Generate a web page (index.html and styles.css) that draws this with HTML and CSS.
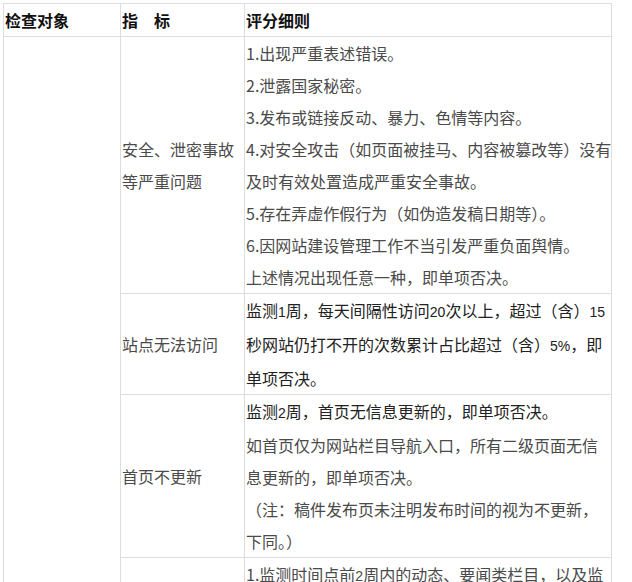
FILE: index.html
```html
<!DOCTYPE html>
<html lang="zh-CN">
<head>
  <meta charset="UTF-8">
  <title>检查指标</title>
  <link rel="stylesheet" href="styles.css">
</head>
<body>

  <table class="tabla">
    <tr class="cabecera">
      <th class="col-objeto">检查对象</th>
      <th class="col-indicador">指　标</th>
      <th class="col-detalle">评分细则</th>
    </tr>
    <tr>
      <td rowspan="4"></td>
      <td class="indicador">安全、泄密事故<br>等严重问题</td>
      <td class="detalle">
        <p>1.出现严重表述错误。</p>
        <p>2.泄露国家秘密。</p>
        <p>3.发布或链接反动、暴力、色情等内容。</p>
        <p>4.对安全攻击（如页面被挂马、内容被篡改等）没有<br>及时有效处置造成严重安全事故。</p>
        <p>5.存在弄虚作假行为（如伪造发稿日期等）。</p>
        <p>6.因网站建设管理工作不当引发严重负面舆情。</p>
        <p>上述情况出现任意一种，即单项否决。</p>
      </td>
    </tr>
    <tr>
      <td class="indicador">站点无法访问</td>
      <td class="detalle oscuro">
        <p>监测<span class="num">1</span>周，每天间隔性访问<span class="num">20</span>次以上，超过（含）<span class="num">15</span><br>秒网站仍打不开的次数累计占比超过（含）<span class="num">5%</span>，即<br>单项否决。</p>
      </td>
    </tr>
    <tr>
      <td class="indicador">首页不更新</td>
      <td class="detalle">
        <p class="oscuro">监测<span class="num">2</span>周，首页无信息更新的，即单项否决。</p>
        <p>如首页仅为网站栏目导航入口，所有二级页面无信<br>息更新的，即单项否决。</p>
        <p>（注：稿件发布页未注明发布时间的视为不更新，<br>下同。）</p>
      </td>
    </tr>
    <tr>
      <td class="indicador">栏目不更新</td>
      <td class="detalle">
        <p>1.监测时间点前<span class="num">2</span>周内的动态、要闻类栏目，以及监<br>测时间点前<span class="num">6</span>个月内的通知公告、政策文件类栏目。</p>
      </td>
    </tr>
  </table>

</body>
</html>
```

FILE: styles.css
```css
* {
  box-sizing: border-box;
}

body {
  margin: 0;
  padding: 3px;
  font-family: "Noto Sans CJK SC", "Microsoft YaHei", sans-serif;
  font-size: 16px;
  color: #4a4a4a;
  background: #ffffff;
}

.tabla {
  border-collapse: collapse;
  width: 608px;
  table-layout: fixed;
}

.tabla th,
.tabla td {
  border: 1px solid #dddddd;
  padding: 0 1px;
  line-height: 32px;
  text-align: left;
  white-space: nowrap;
}

.tabla th {
  font-weight: 700;
  color: #111;
}

.col-objeto {
  width: 117px;
}

.col-indicador {
  width: 124px;
}

.col-detalle {
  width: 367px;
}

.cabecera th {
  height: 33px;
  vertical-align: middle;
}

.indicador {
  vertical-align: middle;
}

.detalle {
  vertical-align: top;
  overflow: hidden;
}

.detalle p {
  margin: 0;
}

.oscuro {
  color: #222;
}

.num {
  font-family: "Liberation Sans", sans-serif;
  font-size: 14px;
}
```
